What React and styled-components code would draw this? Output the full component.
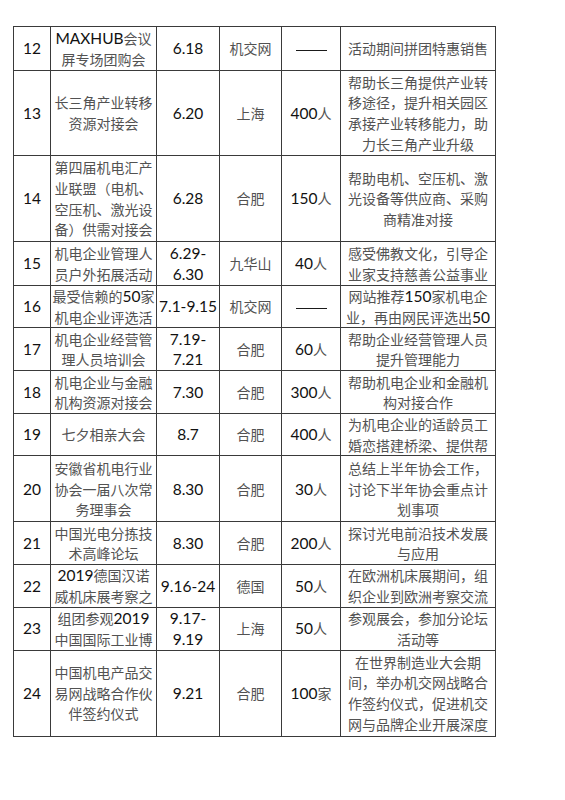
import React from 'react';
import styled, { createGlobalStyle } from 'styled-components';

const GlobalStyle = createGlobalStyle`
  html, body {
    margin: 0;
    padding: 0;
    background: #fff;
  }
  body {
    font-family: "Noto Sans CJK SC", sans-serif;
  }
`;

const Page = styled.div`
  width: 565px;
  height: 800px;
  box-sizing: border-box;
  padding: 26px 0 0 13px;
  background: #fff;
`;

const Table = styled.table`
  border-collapse: collapse;
  table-layout: fixed;
  width: 482px;
  border: 1px solid #3a3a3a;
`;

const Row = styled.tr`
  height: ${p => p.$h}px;
`;

const Cell = styled.td`
  border: 1px solid #3a3a3a;
  padding: 0;
  text-align: center;
  vertical-align: middle;
  font-size: 14px;
  line-height: 20.6px;
  color: #525252;
  white-space: nowrap;
  overflow: hidden;
`;

const Line = styled.div`
  display: block;
`;

const Latin = styled.span`
  font-family: Lato, "Liberation Sans", sans-serif;
  font-size: 15.5px;
  color: #111;
`;

const Dash = styled.span`
  display: inline-block;
  width: 31px;
  height: 1.5px;
  background: #1a1a1a;
  vertical-align: middle;
`;

const cols = [37, 106, 63, 62, 59, 155];

const rows = [
  { h: 44, no: '12', name: ['MAXHUB会议', '屏专场团购会'], date: ['6.18'], place: '机交网', size: null, desc: ['活动期间拼团特惠销售'] },
  { h: 85, no: '13', name: ['长三角产业转移', '资源对接会'], date: ['6.20'], place: '上海', size: '400人', desc: ['帮助长三角提供产业转', '移途径，提升相关园区', '承接产业转移能力，助', '力长三角产业升级'] },
  { h: 86, no: '14', name: ['第四届机电汇产', '业联盟（电机、', '空压机、激光设', '备）供需对接会'], date: ['6.28'], place: '合肥', size: '150人', desc: ['帮助电机、空压机、激', '光设备等供应商、采购', '商精准对接'] },
  { h: 44, no: '15', name: ['机电企业管理人', '员户外拓展活动'], date: ['6.29-', '6.30'], place: '九华山', size: '40人', desc: ['感受佛教文化，引导企', '业家支持慈善公益事业'] },
  { h: 42, no: '16', name: ['最受信赖的50家', '机电企业评选活'], date: ['7.1-9.15'], place: '机交网', size: null, desc: ['网站推荐150家机电企', '业，再由网民评选出50'] },
  { h: 43, no: '17', name: ['机电企业经营管', '理人员培训会'], date: ['7.19-', '7.21'], place: '合肥', size: '60人', desc: ['帮助企业经营管理人员', '提升管理能力'] },
  { h: 43, no: '18', name: ['机电企业与金融', '机构资源对接会'], date: ['7.30'], place: '合肥', size: '300人', desc: ['帮助机电企业和金融机', '构对接合作'] },
  { h: 42, no: '19', name: ['七夕相亲大会'], date: ['8.7'], place: '合肥', size: '400人', desc: ['为机电企业的适龄员工', '婚恋搭建桥梁、提供帮'] },
  { h: 66, no: '20', name: ['安徽省机电行业', '协会一届八次常', '务理事会'], date: ['8.30'], place: '合肥', size: '30人', desc: ['总结上半年协会工作，', '讨论下半年协会重点计', '划事项'] },
  { h: 43, no: '21', name: ['中国光电分拣技', '术高峰论坛'], date: ['8.30'], place: '合肥', size: '200人', desc: ['探讨光电前沿技术发展', '与应用'] },
  { h: 42, no: '22', name: ['2019德国汉诺', '威机床展考察之'], date: ['9.16-24'], place: '德国', size: '50人', desc: ['在欧洲机床展期间，组', '织企业到欧洲考察交流'] },
  { h: 43, no: '23', name: ['组团参观2019', '中国国际工业博'], date: ['9.17-', '9.19'], place: '上海', size: '50人', desc: ['参观展会，参加分论坛', '活动等'] },
  { h: 86, no: '24', name: ['中国机电产品交', '易网战略合作伙', '伴签约仪式'], date: ['9.21'], place: '合肥', size: '100家', desc: ['在世界制造业大会期', '间，举办机交网战略合', '作签约仪式，促进机交', '网与品牌企业开展深度'] },
];

// latin runs get the black sans face, CJK stays in the grey face
const runs = (text) =>
  text.split(/([\x20-\x7E]+)/).filter(Boolean).map((part, i) =>
    /^[\x20-\x7E]+$/.test(part) ? <Latin key={i}>{part}</Latin> : <React.Fragment key={i}>{part}</React.Fragment>
  );

const Lines = ({ items }) => items.map((t, i) => <Line key={i}>{runs(t)}</Line>);

export default function App() {
  return (
    <Page>
      <GlobalStyle />
      <Table>
        <colgroup>
          {cols.map((w, i) => <col key={i} style={{ width: w }} />)}
        </colgroup>
        <tbody>
          {rows.map(r => (
            <Row key={r.no} $h={r.h}>
              <Cell>{runs(r.no)}</Cell>
              <Cell><Lines items={r.name} /></Cell>
              <Cell><Lines items={r.date} /></Cell>
              <Cell>{r.place}</Cell>
              <Cell>{r.size ? runs(r.size) : <Dash />}</Cell>
              <Cell><Lines items={r.desc} /></Cell>
            </Row>
          ))}
        </tbody>
      </Table>
    </Page>
  );
}
